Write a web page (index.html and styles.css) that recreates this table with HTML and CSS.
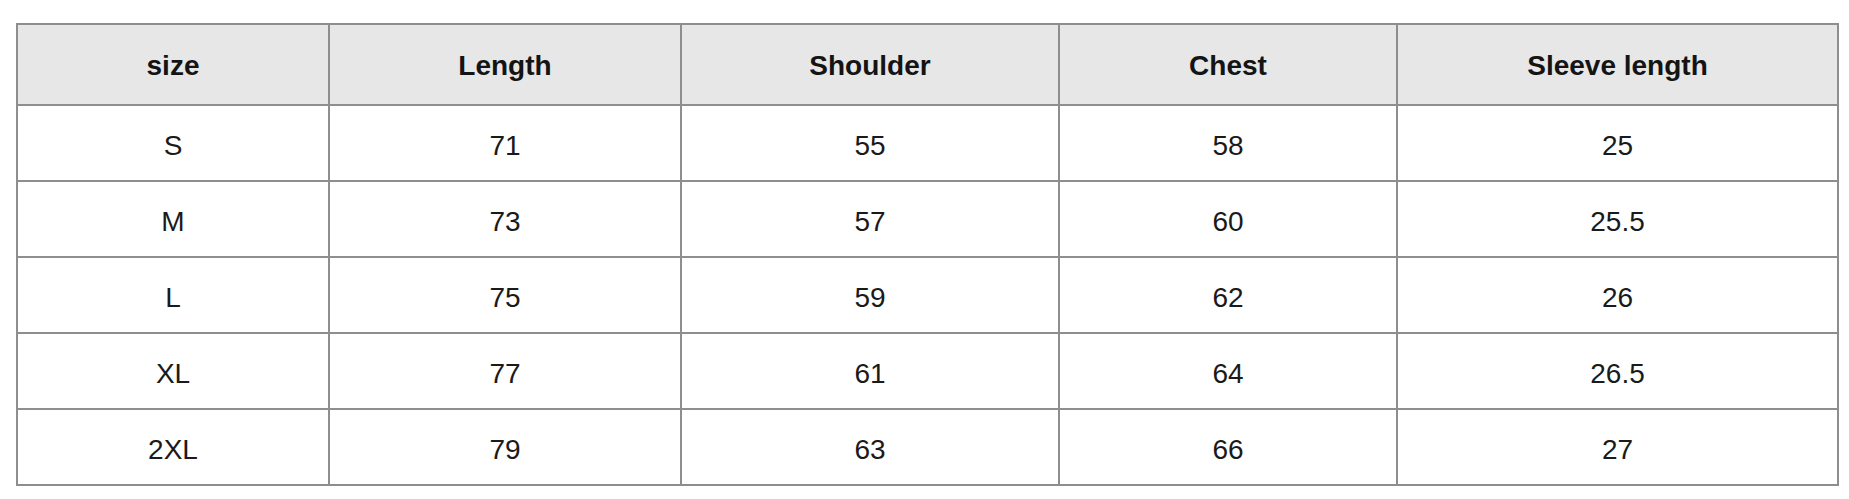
FILE: index.html
```html
<!DOCTYPE html>
<html lang="en">
<head>
<meta charset="utf-8">
<title>Size chart</title>
<link rel="stylesheet" href="styles.css">
</head>
<body>
<div class="page">
  <table class="size-table">
    <colgroup>
      <col class="c1"><col class="c2"><col class="c3"><col class="c4"><col class="c5">
    </colgroup>
    <thead>
      <tr><th>size</th><th>Length</th><th>Shoulder</th><th>Chest</th><th>Sleeve length</th></tr>
    </thead>
    <tbody>
      <tr><td>S</td><td>71</td><td>55</td><td>58</td><td>25</td></tr>
      <tr><td>M</td><td>73</td><td>57</td><td>60</td><td>25.5</td></tr>
      <tr><td>L</td><td>75</td><td>59</td><td>62</td><td>26</td></tr>
      <tr><td>XL</td><td>77</td><td>61</td><td>64</td><td>26.5</td></tr>
      <tr><td>2XL</td><td>79</td><td>63</td><td>66</td><td>27</td></tr>
    </tbody>
  </table>
</div>
</body>
</html>
```

FILE: styles.css
```css
html, body {
  margin: 0;
  padding: 0;
  background: #ffffff;
}

.page {
  padding: 23px 0 0 16px;
}

.size-table {
  border-collapse: collapse;
  table-layout: fixed;
  width: 1823px;
  font-family: "Liberation Sans", Arial, sans-serif;
  color: #1a1a1a;
}

.c1 { width: 312px; }
.c2 { width: 352px; }
.c3 { width: 378px; }
.c4 { width: 338px; }
.c5 { width: 441px; }

.size-table th,
.size-table td {
  border: 2px solid #8e8e8e;
  text-align: center;
  vertical-align: middle;
  padding: 0;
  font-size: 28px;
  line-height: 32px;
}

.size-table th {
  background: #e7e7e7;
  font-weight: 700;
  color: #141414;
  height: 76px;
  padding-top: 3px;
}

.size-table td {
  font-weight: 400;
  height: 68px;
  padding-top: 6px;
}
```
